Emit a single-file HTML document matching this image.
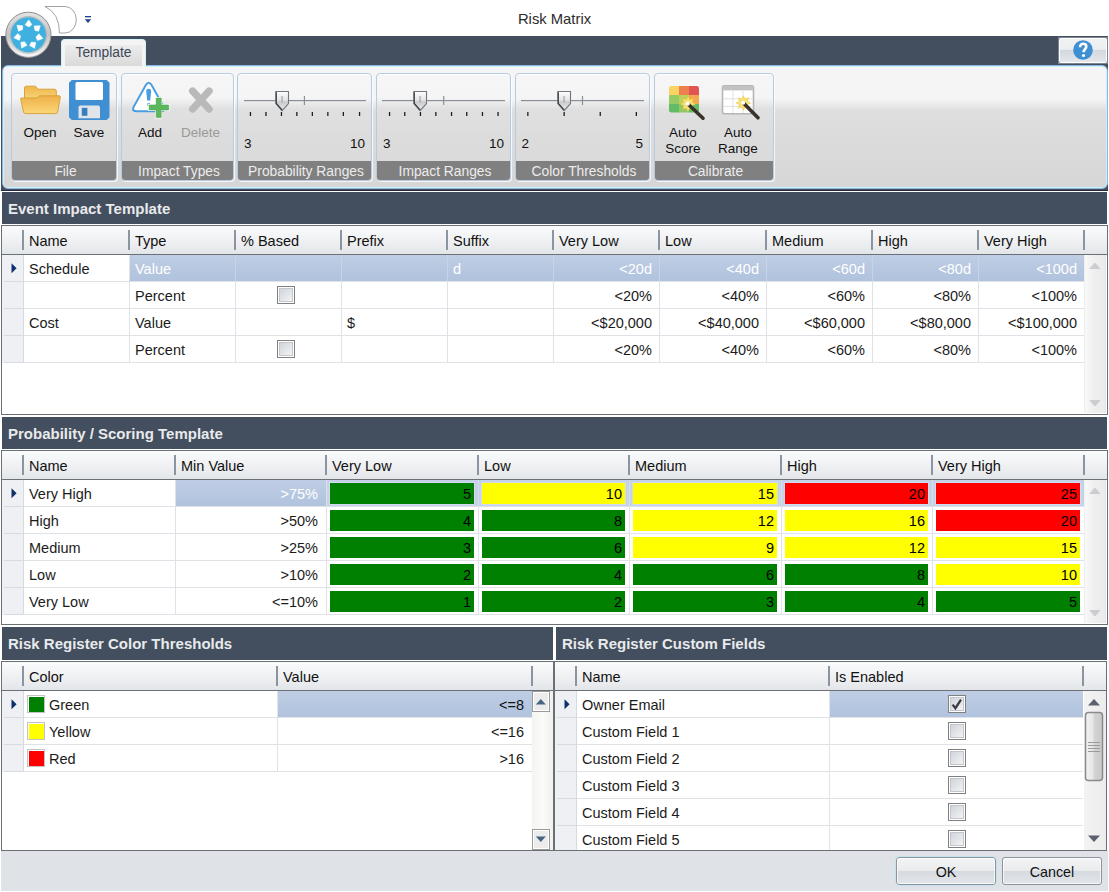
<!DOCTYPE html>
<html><head><meta charset="utf-8">
<style>
*{box-sizing:border-box;margin:0;padding:0}
html,body{width:1109px;height:892px;overflow:hidden;background:#fff;font-family:"Liberation Sans",sans-serif;color:#000}
.a{position:absolute}
.dark{background:#434e5e}
.title{left:0;top:1px;width:1109px;height:36px;text-align:center;font-size:14.8px;line-height:36px;color:#2b2b2b}
.shdr{color:#e8eaec;font-weight:bold;font-size:15px;line-height:33px;padding-left:6px}
.grid{background:#fff;border:1px solid #7b8088}
.grp{position:absolute;top:73px;height:108px;border:1px solid #b5cbe2;border-radius:4px;background:linear-gradient(#f6f6f6 0,#f5f5f5 22%,#e0e0e0 33%,#dcdcdc 60%,#d9d9d9 100%);box-shadow:1px 1px 0 rgba(255,255,255,.75), inset 0 1px 0 #fff}
.glab{position:absolute;left:0;right:0;bottom:0;height:19px;background:#808080;color:#ececec;font-size:13.8px;line-height:21px;text-align:center;padding-left:3px;border-radius:0 0 3px 3px}
.btxt{position:absolute;font-size:13.5px;line-height:16px;color:#111;text-align:center;white-space:nowrap}
.hdr{background:linear-gradient(#fafbfb 0,#f1f2f4 45%,#e3e6e9 100%)}
.hs{background:#8b95a2}
.ht{font-size:14.5px;line-height:29px;color:#111;white-space:nowrap}
.c{font-size:14.5px;line-height:28px;color:#1b1b1b;white-space:nowrap;height:26px}
.r{text-align:right}
.tick{position:absolute;top:112px;width:1.5px;height:4px;background:#222}
</style></head><body>
<div class="a title">Risk Matrix</div>
<!-- dark band -->
<div class="a dark" style="left:1px;top:36px;width:1107px;height:155px"></div>

<!-- help button -->
<div class="a" style="left:1058px;top:37px;width:50px;height:27px;background:#7d8590"></div>
<div class="a" style="left:1059px;top:38px;width:48px;height:25px;background:#fff;border-radius:2px"></div>
<div class="a" style="left:1060px;top:39px;width:46px;height:23px;background:linear-gradient(#f0f1f3 0,#eceef0 45%,#d3d8df 50%,#e4e7eb 100%)"></div>
<svg class="a" style="left:1072px;top:39px" width="22" height="22" viewBox="0 0 22 22"><circle cx="11" cy="11" r="9.8" fill="#3f8fd4"/><path d="M8,8.2 C8,5.8 9.4,4.8 11.2,4.8 C13.2,4.8 14.3,6 14.3,7.6 C14.3,10 11.7,10.4 11.5,13.2" stroke="#fff" stroke-width="2.6" fill="none"/><circle cx="11.5" cy="16.5" r="1.6" fill="#fff"/></svg>

<!-- ribbon panel -->
<div class="a" style="left:2px;top:65px;width:1106px;height:124px;border:1px solid #8fb6e2;border-radius:6px;box-shadow:inset 0 0 0 1px #c9f3fb;background:linear-gradient(#f5f5f5 0,#f5f5f5 27%,#dedede 37%,#dadada 70%,#d6d6d6 100%)"></div>
<div class="a" style="left:1px;top:190px;width:1107px;height:1px;background:#262d38"></div>

<!-- tab -->
<div class="a" style="left:61px;top:39px;width:85px;height:28px;border:1px solid #d3f1f8;border-bottom:none;border-radius:4px 4px 0 0;background:#f4f4f4"></div>
<div class="a" style="left:65px;top:45px;width:77px;height:21px;background:linear-gradient(#ececec,#dadada)"></div>
<div class="a" style="left:61px;top:39px;width:85px;height:27px;font-size:13.8px;line-height:27px;text-align:center;color:#3b4656">Template</div>
<!-- File group -->
<div class="grp" style="left:11px;width:106px"><div class="glab">File</div></div>
<svg class="a" style="left:20px;top:85px" width="41" height="30" viewBox="0 0 41 30">
<defs><linearGradient id="fg1" x1="0" y1="0" x2="0" y2="1"><stop offset="0" stop-color="#efb64c"/><stop offset="1" stop-color="#f7d376"/></linearGradient>
<linearGradient id="fg2" x1="0" y1="0" x2="0" y2="1"><stop offset="0" stop-color="#eeb04a"/><stop offset="1" stop-color="#fbd778"/></linearGradient></defs>
<path d="M4.5,3 Q4.5,1.2 6.3,1.2 L15.5,1.2 L18,4.2 L34.5,4.2 Q36.3,4.2 36.3,6 L36.3,13.5 L4.5,13.5 Z" fill="url(#fg1)" stroke="#d9a23c" stroke-width="1"/>
<path d="M1,13 L17,13 L19.5,10.8 L39.5,10.8 Q40.5,10.8 40.3,12.3 L37.6,27 Q37.3,28.6 35.6,28.6 L5.6,28.6 Q3.9,28.6 3.6,27 L0.8,14.5 Q0.6,13 1,13 Z" fill="url(#fg2)" stroke="#d9a23c" stroke-width="1"/>
</svg>
<svg class="a" style="left:69px;top:80px" width="41" height="40" viewBox="0 0 41 40">
<path d="M2.8,0 L37.7,0 L40.5,2.8 L40.5,37.2 L37.7,40 L2.8,40 L0,37.2 L0,2.8 Z" fill="#3f8fd2"/>
<rect x="6.5" y="2" width="27.5" height="18" rx="1.5" fill="#fff"/>
<path d="M9.5,38.2 L9.5,27.5 Q9.5,25.5 11.5,25.5 L29,25.5 Q31,25.5 31,27.5 L31,38.2 Z" fill="#e1e5ea"/>
<rect x="12.8" y="27.8" width="5.6" height="8" fill="#357fc0"/>
</svg>
<div class="btxt" style="left:20px;top:125px;width:40px">Open</div>
<div class="btxt" style="left:68px;top:125px;width:42px">Save</div>

<!-- Impact Types group -->
<div class="grp" style="left:121px;width:113px"><div class="glab">Impact Types</div></div>
<svg class="a" style="left:128px;top:78px" width="90" height="44" viewBox="0 0 90 44">
<path d="M18,6.8 Q20.7,2.6 23.4,6.8 L35.6,28.6 Q38,33.3 32.6,33.3 L8.8,33.3 Q3.4,33.3 5.8,28.6 Z" fill="#fff" stroke="#4a9de0" stroke-width="2"/>
<path d="M18.2,13 Q18.2,10.8 20.7,10.8 Q23.2,10.8 23.2,13 L22.2,22.6 L19.2,22.6 Z" fill="#4a9de0"/>
<rect x="19.4" y="25.2" width="2.6" height="2.6" fill="#4a9de0"/>
<path d="M27.2,19 H34.2 V26 H41.6 V33 H34.2 V40.4 H27.2 V33 H20.2 V26 H27.2 Z" fill="#fff"/>
<path d="M28.2,20 H33.2 V27 H40.6 V32 H33.2 V39.4 H28.2 V32 H21.2 V27 H28.2 Z" fill="#5cb85c" stroke="#4ea24e" stroke-width="0.6"/>
<path d="M64.6,13 L81.1,31.2 M81.1,13 L64.6,31.2" stroke="#b9b9b9" stroke-width="7.2" stroke-linecap="round"/>
</svg>
<div class="btxt" style="left:130px;top:125px;width:40px">Add</div>
<div class="btxt" style="left:180px;top:125px;width:41px;color:#9a9a9a">Delete</div>

<!-- Probability Ranges -->
<div class="grp" style="left:237px;width:135px"><div class="glab">Probability Ranges</div></div>
<!-- Impact Ranges -->
<div class="grp" style="left:376px;width:135px"><div class="glab">Impact Ranges</div></div>
<!-- Color Thresholds -->
<div class="grp" style="left:515px;width:135px"><div class="glab">Color Thresholds</div></div>
<!-- Calibrate -->
<div class="grp" style="left:654px;width:120px"><div class="glab">Calibrate</div></div>

<svg class="a" style="left:237px;top:85px" width="135" height="35" viewBox="0 0 135 35"><rect x="7" y="15" width="122" height="1.2" fill="#8b9098"/><rect x="66.8" y="11" width="1.2" height="9" fill="#8b9098"/><rect x="12.8" y="27" width="1.3" height="4" fill="#1e1e1e"/><rect x="28.3" y="27" width="1.3" height="4" fill="#1e1e1e"/><rect x="43.8" y="27" width="1.3" height="4" fill="#1e1e1e"/><rect x="59.2" y="27" width="1.3" height="4" fill="#1e1e1e"/><rect x="74.7" y="27" width="1.3" height="4" fill="#1e1e1e"/><rect x="90.2" y="27" width="1.3" height="4" fill="#1e1e1e"/><rect x="105.7" y="27" width="1.3" height="4" fill="#1e1e1e"/><rect x="121.9" y="27" width="1.3" height="4" fill="#1e1e1e"/><defs><linearGradient id="tg237" x1="0" y1="0" x2="0" y2="1"><stop offset="0" stop-color="#fdfdfd"/><stop offset="0.45" stop-color="#e4e4e4"/><stop offset="0.55" stop-color="#cbcbcb"/><stop offset="1" stop-color="#ececec"/></linearGradient></defs><path d="M38.8,6.5 L51.5,6.5 L51.5,18.5 L45.1,25.599999999999994 L38.8,18.5 Z" fill="url(#tg237)" stroke="#70767e" stroke-width="1.1"/><path d="M39.3,7.200000000000003 L39.3,18.5 L45.1,25" stroke="#3f444b" stroke-width="1.2" fill="none"/><rect x="44.6" y="11" width="0.9" height="6.5" fill="#8a9098"/></svg><div class="btxt" style="left:244px;top:136px;text-align:left">3</div><div class="btxt" style="left:325px;top:136px;width:40px;text-align:right">10</div>
<svg class="a" style="left:376px;top:85px" width="135" height="35" viewBox="0 0 135 35"><rect x="6" y="15" width="123" height="1.2" fill="#8b9098"/><rect x="67.1" y="11" width="1.2" height="9" fill="#8b9098"/><rect x="12.9" y="27" width="1.3" height="4" fill="#1e1e1e"/><rect x="28.1" y="27" width="1.3" height="4" fill="#1e1e1e"/><rect x="43.8" y="27" width="1.3" height="4" fill="#1e1e1e"/><rect x="59.2" y="27" width="1.3" height="4" fill="#1e1e1e"/><rect x="74.9" y="27" width="1.3" height="4" fill="#1e1e1e"/><rect x="90.1" y="27" width="1.3" height="4" fill="#1e1e1e"/><rect x="105.8" y="27" width="1.3" height="4" fill="#1e1e1e"/><rect x="121.4" y="27" width="1.3" height="4" fill="#1e1e1e"/><defs><linearGradient id="tg376" x1="0" y1="0" x2="0" y2="1"><stop offset="0" stop-color="#fdfdfd"/><stop offset="0.45" stop-color="#e4e4e4"/><stop offset="0.55" stop-color="#cbcbcb"/><stop offset="1" stop-color="#ececec"/></linearGradient></defs><path d="M37.8,6.5 L50.5,6.5 L50.5,18.5 L44.1,25.599999999999994 L37.8,18.5 Z" fill="url(#tg376)" stroke="#70767e" stroke-width="1.1"/><path d="M38.3,7.200000000000003 L38.3,18.5 L44.1,25" stroke="#3f444b" stroke-width="1.2" fill="none"/><rect x="43.6" y="11" width="0.9" height="6.5" fill="#8a9098"/></svg><div class="btxt" style="left:383px;top:136px;text-align:left">3</div><div class="btxt" style="left:464px;top:136px;width:40px;text-align:right">10</div>
<svg class="a" style="left:515px;top:85px" width="135" height="35" viewBox="0 0 135 35"><rect x="6" y="15" width="123" height="1.2" fill="#8b9098"/><rect x="66.9" y="11" width="1.2" height="9" fill="#8b9098"/><rect x="12.2" y="27" width="1.3" height="4" fill="#1e1e1e"/><rect x="48.5" y="27" width="1.3" height="4" fill="#1e1e1e"/><rect x="84.6" y="27" width="1.3" height="4" fill="#1e1e1e"/><rect x="120.7" y="27" width="1.3" height="4" fill="#1e1e1e"/><defs><linearGradient id="tg515" x1="0" y1="0" x2="0" y2="1"><stop offset="0" stop-color="#fdfdfd"/><stop offset="0.45" stop-color="#e4e4e4"/><stop offset="0.55" stop-color="#cbcbcb"/><stop offset="1" stop-color="#ececec"/></linearGradient></defs><path d="M42.8,6.5 L55.5,6.5 L55.5,18.5 L49.1,25.599999999999994 L42.8,18.5 Z" fill="url(#tg515)" stroke="#70767e" stroke-width="1.1"/><path d="M43.3,7.200000000000003 L43.3,18.5 L49.1,25" stroke="#3f444b" stroke-width="1.2" fill="none"/><rect x="48.6" y="11" width="0.9" height="6.5" fill="#8a9098"/></svg><div class="btxt" style="left:521.5px;top:136px;text-align:left">2</div><div class="btxt" style="left:603px;top:136px;width:40px;text-align:right">5</div>
<svg class="a" style="left:668px;top:85px" width="38" height="36" viewBox="0 0 38 36">
<defs><clipPath id="gc"><rect x="1" y="1" width="30" height="26.5" rx="2.2"/></clipPath></defs>
<g clip-path="url(#gc)">
<rect x="1" y="1" width="10" height="9" fill="#fad460"/><rect x="11" y="1" width="10" height="9" fill="#ee8050"/><rect x="21" y="1" width="10" height="9" fill="#e05454"/>
<rect x="1" y="10" width="10" height="9" fill="#97c964"/><rect x="11" y="10" width="10" height="9" fill="#bcd05a"/><rect x="21" y="10" width="10" height="9" fill="#f3a84e"/>
<rect x="1" y="19" width="10" height="9" fill="#62bc66"/><rect x="11" y="19" width="10" height="9" fill="#92c764"/><rect x="21" y="19" width="10" height="9" fill="#62bc66"/>
</g>
<path d="M20.00,11.80 L21.61,15.12 L25.09,13.91 L23.88,17.39 L27.20,19.00 L23.88,20.61 L25.09,24.09 L21.61,22.88 L20.00,26.20 L18.39,22.88 L14.91,24.09 L16.12,20.61 L12.80,19.00 L16.12,17.39 L14.91,13.91 L18.39,15.12 Z" fill="#f9e27a" stroke="#f3cf4a" stroke-width="0.8"/>
<path d="M20.5,19.5 L35,33.2" stroke="#3a3228" stroke-width="3.6" stroke-linecap="round"/>
<circle cx="19.8" cy="18.8" r="2" fill="#fff"/>
</svg>
<svg class="a" style="left:721px;top:84px" width="40" height="37" viewBox="0 0 40 37">
<rect x="1.5" y="1.8" width="31" height="28" rx="2" fill="#fff" stroke="#b5b5b5" stroke-width="1.6"/>
<rect x="1.5" y="1.8" width="31" height="4.6" fill="#c2c2c2"/>
<path d="M12,6.4 V29 M22,6.4 V29 M2,14.8 H32 M2,22.4 H32" stroke="#e2e2e2" stroke-width="1"/>
<path d="M22.40,11.80 L24.01,15.12 L27.49,13.91 L26.28,17.39 L29.60,19.00 L26.28,20.61 L27.49,24.09 L24.01,22.88 L22.40,26.20 L20.79,22.88 L17.31,24.09 L18.52,20.61 L15.20,19.00 L18.52,17.39 L17.31,13.91 L20.79,15.12 Z" fill="#f9e27a" stroke="#f3cf4a" stroke-width="0.8"/>
<path d="M22.9,19.5 L37,33.8" stroke="#3a3228" stroke-width="3.6" stroke-linecap="round"/>
<circle cx="22.2" cy="18.8" r="2" fill="#fff"/>
</svg>
<div class="btxt" style="left:662px;top:125px;width:42px">Auto<br>Score</div>
<div class="btxt" style="left:716px;top:125px;width:44px">Auto<br>Range</div>

<!-- section headers & grids -->
<div class="a dark shdr" style="left:2px;top:192px;width:1105px;height:32px">Event Impact Template</div>
<div class="a dark shdr" style="left:2px;top:417px;width:1105px;height:32px">Probability / Scoring Template</div>
<div class="a dark shdr" style="left:2px;top:627px;width:551px;height:33px">Risk Register Color Thresholds</div>
<div class="a dark shdr" style="left:556px;top:627px;width:551px;height:33px">Risk Register Custom Fields</div>
<div class="a " style="left:1px;top:225px;width:1107px;height:190px;border:1px solid #6b7076;background:#fff"></div>
<div class="a hdr" style="left:2px;top:226px;width:1105px;height:28px;"></div>
<div class="a " style="left:2px;top:254px;width:1105px;height:1px;background:#6b7076"></div>
<div class="a hs" style="left:22px;top:230px;width:2px;height:20px;"></div>
<div class="a ht" style="left:29px;top:227px">Name</div>
<div class="a hs" style="left:128px;top:230px;width:2px;height:20px;"></div>
<div class="a ht" style="left:135px;top:227px">Type</div>
<div class="a hs" style="left:234px;top:230px;width:2px;height:20px;"></div>
<div class="a ht" style="left:241px;top:227px">% Based</div>
<div class="a hs" style="left:340px;top:230px;width:2px;height:20px;"></div>
<div class="a ht" style="left:347px;top:227px">Prefix</div>
<div class="a hs" style="left:446px;top:230px;width:2px;height:20px;"></div>
<div class="a ht" style="left:453px;top:227px">Suffix</div>
<div class="a hs" style="left:552px;top:230px;width:2px;height:20px;"></div>
<div class="a ht" style="left:559px;top:227px">Very Low</div>
<div class="a hs" style="left:658px;top:230px;width:2px;height:20px;"></div>
<div class="a ht" style="left:665px;top:227px">Low</div>
<div class="a hs" style="left:765px;top:230px;width:2px;height:20px;"></div>
<div class="a ht" style="left:772px;top:227px">Medium</div>
<div class="a hs" style="left:871px;top:230px;width:2px;height:20px;"></div>
<div class="a ht" style="left:878px;top:227px">High</div>
<div class="a hs" style="left:977px;top:230px;width:2px;height:20px;"></div>
<div class="a ht" style="left:984px;top:227px">Very High</div>
<div class="a hs" style="left:1083px;top:230px;width:2px;height:20px;"></div>
<div class="a " style="left:2px;top:255px;width:21px;height:108px;background:#eef0f4"></div>
<div class="a " style="left:23px;top:255px;width:1px;height:108px;background:#d6dbe2"></div>
<div class="a " style="left:4px;top:281px;width:19px;height:1px;background:#d6dbe2"></div>
<div class="a " style="left:24px;top:281px;width:1060px;height:1px;background:#dfe3e8"></div>
<div class="a " style="left:4px;top:308px;width:19px;height:1px;background:#d6dbe2"></div>
<div class="a " style="left:24px;top:308px;width:1060px;height:1px;background:#dfe3e8"></div>
<div class="a " style="left:4px;top:335px;width:19px;height:1px;background:#d6dbe2"></div>
<div class="a " style="left:24px;top:335px;width:1060px;height:1px;background:#dfe3e8"></div>
<div class="a " style="left:4px;top:362px;width:19px;height:1px;background:#d6dbe2"></div>
<div class="a " style="left:24px;top:362px;width:1060px;height:1px;background:#dfe3e8"></div>
<svg class="a" style="left:11px;top:263px" width="6" height="11" viewBox="0 0 6 11"><path d="M0.5,0.3 L5.6,5.3 L0.5,10.3 Z" fill="#0f2f6e"/></svg>
<div class="a " style="left:129px;top:255px;width:1px;height:108px;background:#dfe3e8"></div>
<div class="a " style="left:235px;top:255px;width:1px;height:108px;background:#dfe3e8"></div>
<div class="a " style="left:341px;top:255px;width:1px;height:108px;background:#dfe3e8"></div>
<div class="a " style="left:447px;top:255px;width:1px;height:108px;background:#dfe3e8"></div>
<div class="a " style="left:553px;top:255px;width:1px;height:108px;background:#dfe3e8"></div>
<div class="a " style="left:659px;top:255px;width:1px;height:108px;background:#dfe3e8"></div>
<div class="a " style="left:766px;top:255px;width:1px;height:108px;background:#dfe3e8"></div>
<div class="a " style="left:872px;top:255px;width:1px;height:108px;background:#dfe3e8"></div>
<div class="a " style="left:978px;top:255px;width:1px;height:108px;background:#dfe3e8"></div>
<div class="a " style="left:130px;top:255px;width:954px;height:26px;background:linear-gradient(#bfcee4,#b0c2dd)"></div>
<div class="a " style="left:235px;top:255px;width:1px;height:26px;background:#c9d5e6"></div>
<div class="a " style="left:341px;top:255px;width:1px;height:26px;background:#c9d5e6"></div>
<div class="a " style="left:447px;top:255px;width:1px;height:26px;background:#c9d5e6"></div>
<div class="a " style="left:553px;top:255px;width:1px;height:26px;background:#c9d5e6"></div>
<div class="a " style="left:659px;top:255px;width:1px;height:26px;background:#c9d5e6"></div>
<div class="a " style="left:766px;top:255px;width:1px;height:26px;background:#c9d5e6"></div>
<div class="a " style="left:872px;top:255px;width:1px;height:26px;background:#c9d5e6"></div>
<div class="a " style="left:978px;top:255px;width:1px;height:26px;background:#c9d5e6"></div>
<div class="a c" style="left:29px;top:255px;color:#1b1b1b">Schedule</div>
<div class="a c" style="left:135px;top:255px;color:#fff">Value</div>
<div class="a c" style="left:453px;top:255px;color:#fff">d</div>
<div class="a c r" style="left:554px;top:255px;width:98px;color:#fff">&lt;20d</div>
<div class="a c r" style="left:660px;top:255px;width:99px;color:#fff">&lt;40d</div>
<div class="a c r" style="left:767px;top:255px;width:98px;color:#fff">&lt;60d</div>
<div class="a c r" style="left:873px;top:255px;width:98px;color:#fff">&lt;80d</div>
<div class="a c r" style="left:979px;top:255px;width:98px;color:#fff">&lt;100d</div>
<div class="a c" style="left:135px;top:282px;color:#1b1b1b">Percent</div>
<svg class="a" style="left:277px;top:286px" width="18" height="18" viewBox="0 0 18 18"><defs><linearGradient id="cbg" x1="0" y1="0" x2="1" y2="1"><stop offset="0" stop-color="#cfd3da"/><stop offset="1" stop-color="#f3f4f4"/></linearGradient></defs><rect x="0.5" y="0.5" width="17" height="17" fill="#fff" stroke="#808080" stroke-width="1"/><rect x="2.5" y="2.5" width="13" height="13" fill="url(#cbg)" stroke="#c2c6cd" stroke-width="1"/></svg>
<div class="a c r" style="left:554px;top:282px;width:98px;color:#1b1b1b">&lt;20%</div>
<div class="a c r" style="left:660px;top:282px;width:99px;color:#1b1b1b">&lt;40%</div>
<div class="a c r" style="left:767px;top:282px;width:98px;color:#1b1b1b">&lt;60%</div>
<div class="a c r" style="left:873px;top:282px;width:98px;color:#1b1b1b">&lt;80%</div>
<div class="a c r" style="left:979px;top:282px;width:98px;color:#1b1b1b">&lt;100%</div>
<div class="a c" style="left:29px;top:309px;color:#1b1b1b">Cost</div>
<div class="a c" style="left:135px;top:309px;color:#1b1b1b">Value</div>
<div class="a c" style="left:347px;top:309px;color:#1b1b1b">$</div>
<div class="a c r" style="left:554px;top:309px;width:98px;color:#1b1b1b">&lt;$20,000</div>
<div class="a c r" style="left:660px;top:309px;width:99px;color:#1b1b1b">&lt;$40,000</div>
<div class="a c r" style="left:767px;top:309px;width:98px;color:#1b1b1b">&lt;$60,000</div>
<div class="a c r" style="left:873px;top:309px;width:98px;color:#1b1b1b">&lt;$80,000</div>
<div class="a c r" style="left:979px;top:309px;width:98px;color:#1b1b1b">&lt;$100,000</div>
<div class="a c" style="left:135px;top:336px;color:#1b1b1b">Percent</div>
<svg class="a" style="left:277px;top:340px" width="18" height="18" viewBox="0 0 18 18"><defs><linearGradient id="cbg" x1="0" y1="0" x2="1" y2="1"><stop offset="0" stop-color="#cfd3da"/><stop offset="1" stop-color="#f3f4f4"/></linearGradient></defs><rect x="0.5" y="0.5" width="17" height="17" fill="#fff" stroke="#808080" stroke-width="1"/><rect x="2.5" y="2.5" width="13" height="13" fill="url(#cbg)" stroke="#c2c6cd" stroke-width="1"/></svg>
<div class="a c r" style="left:554px;top:336px;width:98px;color:#1b1b1b">&lt;20%</div>
<div class="a c r" style="left:660px;top:336px;width:99px;color:#1b1b1b">&lt;40%</div>
<div class="a c r" style="left:767px;top:336px;width:98px;color:#1b1b1b">&lt;60%</div>
<div class="a c r" style="left:873px;top:336px;width:98px;color:#1b1b1b">&lt;80%</div>
<div class="a c r" style="left:979px;top:336px;width:98px;color:#1b1b1b">&lt;100%</div>
<div class="a " style="left:1084px;top:255px;width:23px;height:159px;background:#fff"><div style="width:22px;height:158px;background:linear-gradient(90deg,#e9ebee 0,#f9f9f9 8%,#f4f4f4 20%,#eeeeee 50%,#ececec 90%,#e4e6e9 100%)"></div></div>
<svg class="a" style="left:1088px;top:262px" width="14" height="8" viewBox="0 0 14 8"><path d="M1.2,7 L6.3,1 L7.5,1 L12.6,7 Z" fill="#cbccd0"/></svg>
<svg class="a" style="left:1088px;top:399px" width="14" height="8" viewBox="0 0 14 8"><path d="M1.2,1 L12.6,1 L7.5,7 L6.3,7 Z" fill="#cbccd0"/></svg>
<div class="a " style="left:1px;top:450px;width:1107px;height:175px;border:1px solid #6b7076;background:#fff"></div>
<div class="a hdr" style="left:2px;top:451px;width:1105px;height:28px;"></div>
<div class="a " style="left:2px;top:479px;width:1105px;height:1px;background:#6b7076"></div>
<div class="a hs" style="left:22px;top:455px;width:2px;height:20px;"></div>
<div class="a ht" style="left:29px;top:452px">Name</div>
<div class="a hs" style="left:174px;top:455px;width:2px;height:20px;"></div>
<div class="a ht" style="left:181px;top:452px">Min Value</div>
<div class="a hs" style="left:325px;top:455px;width:2px;height:20px;"></div>
<div class="a ht" style="left:332px;top:452px">Very Low</div>
<div class="a hs" style="left:477px;top:455px;width:2px;height:20px;"></div>
<div class="a ht" style="left:484px;top:452px">Low</div>
<div class="a hs" style="left:628px;top:455px;width:2px;height:20px;"></div>
<div class="a ht" style="left:635px;top:452px">Medium</div>
<div class="a hs" style="left:780px;top:455px;width:2px;height:20px;"></div>
<div class="a ht" style="left:787px;top:452px">High</div>
<div class="a hs" style="left:931px;top:455px;width:2px;height:20px;"></div>
<div class="a ht" style="left:938px;top:452px">Very High</div>
<div class="a hs" style="left:1083px;top:455px;width:2px;height:20px;"></div>
<div class="a " style="left:2px;top:480px;width:21px;height:135px;background:#eef0f4"></div>
<div class="a " style="left:23px;top:480px;width:1px;height:135px;background:#d6dbe2"></div>
<div class="a " style="left:4px;top:506px;width:19px;height:1px;background:#d6dbe2"></div>
<div class="a " style="left:24px;top:506px;width:1060px;height:1px;background:#dfe3e8"></div>
<div class="a " style="left:4px;top:533px;width:19px;height:1px;background:#d6dbe2"></div>
<div class="a " style="left:24px;top:533px;width:1060px;height:1px;background:#dfe3e8"></div>
<div class="a " style="left:4px;top:560px;width:19px;height:1px;background:#d6dbe2"></div>
<div class="a " style="left:24px;top:560px;width:1060px;height:1px;background:#dfe3e8"></div>
<div class="a " style="left:4px;top:587px;width:19px;height:1px;background:#d6dbe2"></div>
<div class="a " style="left:24px;top:587px;width:1060px;height:1px;background:#dfe3e8"></div>
<div class="a " style="left:4px;top:614px;width:19px;height:1px;background:#d6dbe2"></div>
<div class="a " style="left:24px;top:614px;width:1060px;height:1px;background:#dfe3e8"></div>
<svg class="a" style="left:11px;top:488px" width="6" height="11" viewBox="0 0 6 11"><path d="M0.5,0.3 L5.6,5.3 L0.5,10.3 Z" fill="#0f2f6e"/></svg>
<div class="a " style="left:175px;top:480px;width:1px;height:135px;background:#dfe3e8"></div>
<div class="a " style="left:326px;top:480px;width:1px;height:135px;background:#dfe3e8"></div>
<div class="a " style="left:478px;top:480px;width:1px;height:135px;background:#dfe3e8"></div>
<div class="a " style="left:629px;top:480px;width:1px;height:135px;background:#dfe3e8"></div>
<div class="a " style="left:781px;top:480px;width:1px;height:135px;background:#dfe3e8"></div>
<div class="a " style="left:932px;top:480px;width:1px;height:135px;background:#dfe3e8"></div>
<div class="a " style="left:327px;top:480px;width:757px;height:26px;background:#c5d2e7"></div>
<div class="a " style="left:478px;top:480px;width:1px;height:26px;background:#d5dde9"></div>
<div class="a " style="left:629px;top:480px;width:1px;height:26px;background:#d5dde9"></div>
<div class="a " style="left:781px;top:480px;width:1px;height:26px;background:#d5dde9"></div>
<div class="a " style="left:932px;top:480px;width:1px;height:26px;background:#d5dde9"></div>
<div class="a c" style="left:29px;top:480px;color:#1b1b1b">Very High</div>
<div class="a " style="left:176px;top:480px;width:150px;height:26px;background:linear-gradient(#bfcee4,#b0c2dd)"></div>
<div class="a c r" style="left:176px;top:480px;width:142px;color:#fff">&gt;75%</div>
<div class="a " style="left:329px;top:482px;width:146px;height:23px;background:#d3dcef"></div>
<div class="a " style="left:330px;top:483px;width:144px;height:21px;background:#008000"></div>
<div class="a c r" style="left:330px;top:480px;width:141px;color:#000">5</div>
<div class="a " style="left:481px;top:482px;width:145px;height:23px;background:#d3dcef"></div>
<div class="a " style="left:482px;top:483px;width:143px;height:21px;background:#ffff00"></div>
<div class="a c r" style="left:482px;top:480px;width:140px;color:#000">10</div>
<div class="a " style="left:632px;top:482px;width:146px;height:23px;background:#d3dcef"></div>
<div class="a " style="left:633px;top:483px;width:144px;height:21px;background:#ffff00"></div>
<div class="a c r" style="left:633px;top:480px;width:141px;color:#000">15</div>
<div class="a " style="left:784px;top:482px;width:145px;height:23px;background:#d3dcef"></div>
<div class="a " style="left:785px;top:483px;width:143px;height:21px;background:#ff0000"></div>
<div class="a c r" style="left:785px;top:480px;width:140px;color:#000">20</div>
<div class="a " style="left:935px;top:482px;width:146px;height:23px;background:#d3dcef"></div>
<div class="a " style="left:936px;top:483px;width:144px;height:21px;background:#ff0000"></div>
<div class="a c r" style="left:936px;top:480px;width:141px;color:#000">25</div>
<div class="a c" style="left:29px;top:507px;color:#1b1b1b">High</div>
<div class="a c r" style="left:176px;top:507px;width:142px;color:#1b1b1b">&gt;50%</div>
<div class="a " style="left:330px;top:510px;width:144px;height:21px;background:#008000"></div>
<div class="a c r" style="left:330px;top:507px;width:141px;color:#000">4</div>
<div class="a " style="left:482px;top:510px;width:143px;height:21px;background:#008000"></div>
<div class="a c r" style="left:482px;top:507px;width:140px;color:#000">8</div>
<div class="a " style="left:633px;top:510px;width:144px;height:21px;background:#ffff00"></div>
<div class="a c r" style="left:633px;top:507px;width:141px;color:#000">12</div>
<div class="a " style="left:785px;top:510px;width:143px;height:21px;background:#ffff00"></div>
<div class="a c r" style="left:785px;top:507px;width:140px;color:#000">16</div>
<div class="a " style="left:936px;top:510px;width:144px;height:21px;background:#ff0000"></div>
<div class="a c r" style="left:936px;top:507px;width:141px;color:#000">20</div>
<div class="a c" style="left:29px;top:534px;color:#1b1b1b">Medium</div>
<div class="a c r" style="left:176px;top:534px;width:142px;color:#1b1b1b">&gt;25%</div>
<div class="a " style="left:330px;top:537px;width:144px;height:21px;background:#008000"></div>
<div class="a c r" style="left:330px;top:534px;width:141px;color:#000">3</div>
<div class="a " style="left:482px;top:537px;width:143px;height:21px;background:#008000"></div>
<div class="a c r" style="left:482px;top:534px;width:140px;color:#000">6</div>
<div class="a " style="left:633px;top:537px;width:144px;height:21px;background:#ffff00"></div>
<div class="a c r" style="left:633px;top:534px;width:141px;color:#000">9</div>
<div class="a " style="left:785px;top:537px;width:143px;height:21px;background:#ffff00"></div>
<div class="a c r" style="left:785px;top:534px;width:140px;color:#000">12</div>
<div class="a " style="left:936px;top:537px;width:144px;height:21px;background:#ffff00"></div>
<div class="a c r" style="left:936px;top:534px;width:141px;color:#000">15</div>
<div class="a c" style="left:29px;top:561px;color:#1b1b1b">Low</div>
<div class="a c r" style="left:176px;top:561px;width:142px;color:#1b1b1b">&gt;10%</div>
<div class="a " style="left:330px;top:564px;width:144px;height:21px;background:#008000"></div>
<div class="a c r" style="left:330px;top:561px;width:141px;color:#000">2</div>
<div class="a " style="left:482px;top:564px;width:143px;height:21px;background:#008000"></div>
<div class="a c r" style="left:482px;top:561px;width:140px;color:#000">4</div>
<div class="a " style="left:633px;top:564px;width:144px;height:21px;background:#008000"></div>
<div class="a c r" style="left:633px;top:561px;width:141px;color:#000">6</div>
<div class="a " style="left:785px;top:564px;width:143px;height:21px;background:#008000"></div>
<div class="a c r" style="left:785px;top:561px;width:140px;color:#000">8</div>
<div class="a " style="left:936px;top:564px;width:144px;height:21px;background:#ffff00"></div>
<div class="a c r" style="left:936px;top:561px;width:141px;color:#000">10</div>
<div class="a c" style="left:29px;top:588px;color:#1b1b1b">Very Low</div>
<div class="a c r" style="left:176px;top:588px;width:142px;color:#1b1b1b">&lt;=10%</div>
<div class="a " style="left:330px;top:591px;width:144px;height:21px;background:#008000"></div>
<div class="a c r" style="left:330px;top:588px;width:141px;color:#000">1</div>
<div class="a " style="left:482px;top:591px;width:143px;height:21px;background:#008000"></div>
<div class="a c r" style="left:482px;top:588px;width:140px;color:#000">2</div>
<div class="a " style="left:633px;top:591px;width:144px;height:21px;background:#008000"></div>
<div class="a c r" style="left:633px;top:588px;width:141px;color:#000">3</div>
<div class="a " style="left:785px;top:591px;width:143px;height:21px;background:#008000"></div>
<div class="a c r" style="left:785px;top:588px;width:140px;color:#000">4</div>
<div class="a " style="left:936px;top:591px;width:144px;height:21px;background:#008000"></div>
<div class="a c r" style="left:936px;top:588px;width:141px;color:#000">5</div>
<div class="a " style="left:1084px;top:480px;width:23px;height:144px;background:#fff"><div style="width:22px;height:143px;background:linear-gradient(90deg,#e9ebee 0,#f9f9f9 8%,#f4f4f4 20%,#eeeeee 50%,#ececec 90%,#e4e6e9 100%)"></div></div>
<svg class="a" style="left:1088px;top:487px" width="14" height="8" viewBox="0 0 14 8"><path d="M1.2,7 L6.3,1 L7.5,1 L12.6,7 Z" fill="#cbccd0"/></svg>
<svg class="a" style="left:1088px;top:609px" width="14" height="8" viewBox="0 0 14 8"><path d="M1.2,1 L12.6,1 L7.5,7 L6.3,7 Z" fill="#cbccd0"/></svg>
<div class="a " style="left:1px;top:661px;width:553px;height:190px;border:1px solid #6b7076;background:#fff"></div>
<div class="a hdr" style="left:2px;top:662px;width:551px;height:28px;"></div>
<div class="a " style="left:2px;top:690px;width:551px;height:1px;background:#6b7076"></div>
<div class="a hs" style="left:22px;top:666px;width:2px;height:20px;"></div>
<div class="a ht" style="left:29px;top:663px">Color</div>
<div class="a hs" style="left:276px;top:666px;width:2px;height:20px;"></div>
<div class="a ht" style="left:283px;top:663px">Value</div>
<div class="a hs" style="left:531px;top:666px;width:2px;height:20px;"></div>
<div class="a " style="left:2px;top:691px;width:21px;height:81px;background:#eef0f4"></div>
<div class="a " style="left:23px;top:691px;width:1px;height:81px;background:#d6dbe2"></div>
<div class="a " style="left:4px;top:717px;width:19px;height:1px;background:#d6dbe2"></div>
<div class="a " style="left:24px;top:717px;width:508px;height:1px;background:#dfe3e8"></div>
<div class="a " style="left:4px;top:744px;width:19px;height:1px;background:#d6dbe2"></div>
<div class="a " style="left:24px;top:744px;width:508px;height:1px;background:#dfe3e8"></div>
<div class="a " style="left:4px;top:771px;width:19px;height:1px;background:#d6dbe2"></div>
<div class="a " style="left:24px;top:771px;width:508px;height:1px;background:#dfe3e8"></div>
<svg class="a" style="left:11px;top:699px" width="6" height="11" viewBox="0 0 6 11"><path d="M0.5,0.3 L5.6,5.3 L0.5,10.3 Z" fill="#0f2f6e"/></svg>
<div class="a " style="left:277px;top:691px;width:1px;height:81px;background:#dfe3e8"></div>
<div class="a " style="left:27px;top:695px;width:18px;height:18px;border:1px solid #c3c3c3;background:#fff;padding:1px 0 0 1px"><div style="width:15px;height:15px;background:#008000"></div></div>
<div class="a c" style="left:49px;top:691px">Green</div>
<div class="a " style="left:278px;top:691px;width:254px;height:26px;background:linear-gradient(#bfcee4,#b0c2dd)"></div>
<div class="a c r" style="left:278px;top:691px;width:246px;color:#111">&lt;=8</div>
<div class="a " style="left:27px;top:722px;width:18px;height:18px;border:1px solid #c3c3c3;background:#fff;padding:1px 0 0 1px"><div style="width:15px;height:15px;background:#ffff00"></div></div>
<div class="a c" style="left:49px;top:718px">Yellow</div>
<div class="a c r" style="left:278px;top:718px;width:246px;color:#1b1b1b">&lt;=16</div>
<div class="a " style="left:27px;top:749px;width:18px;height:18px;border:1px solid #c3c3c3;background:#fff;padding:1px 0 0 1px"><div style="width:15px;height:15px;background:#ff0000"></div></div>
<div class="a c" style="left:49px;top:745px">Red</div>
<div class="a c r" style="left:278px;top:745px;width:246px;color:#1b1b1b">&gt;16</div>
<div class="a " style="left:532px;top:691px;width:21px;height:159px;background:linear-gradient(90deg,#f4f4f0,#fbfbfa 50%,#f0f0ec)"></div>
<div class="a " style="left:532px;top:691px;width:18px;height:21px;border:1px solid #9a9a9a;background:#fff;padding:1px"><div style="width:14px;height:17px;background:#ececec"></div></div>
<svg class="a" style="left:535px;top:698px" width="12" height="7" viewBox="0 0 12 7"><path d="M0.8,6.5 L5.8,1 L10.8,6.5 Z" fill="#476581"/></svg>
<div class="a " style="left:532px;top:829px;width:18px;height:21px;border:1px solid #9a9a9a;background:#fff;padding:1px"><div style="width:14px;height:17px;background:#ececec"></div></div>
<svg class="a" style="left:535px;top:836px" width="12" height="7" viewBox="0 0 12 7"><path d="M0.8,0.5 L5.8,6 L10.8,0.5 Z" fill="#476581"/></svg>
<div class="a " style="left:554px;top:661px;width:553px;height:190px;border:1px solid #6b7076;background:#fff"></div>
<div class="a hdr" style="left:555px;top:662px;width:551px;height:28px;"></div>
<div class="a " style="left:555px;top:690px;width:551px;height:1px;background:#6b7076"></div>
<div class="a hs" style="left:575px;top:666px;width:2px;height:20px;"></div>
<div class="a ht" style="left:582px;top:663px">Name</div>
<div class="a hs" style="left:828px;top:666px;width:2px;height:20px;"></div>
<div class="a ht" style="left:835px;top:663px">Is Enabled</div>
<div class="a hs" style="left:1082px;top:666px;width:2px;height:20px;"></div>
<div class="a " style="left:555px;top:691px;width:21px;height:159px;background:#eef0f4"></div>
<div class="a " style="left:576px;top:691px;width:1px;height:159px;background:#d6dbe2"></div>
<div class="a " style="left:557px;top:717px;width:19px;height:1px;background:#d6dbe2"></div>
<div class="a " style="left:577px;top:717px;width:506px;height:1px;background:#dfe3e8"></div>
<div class="a " style="left:557px;top:744px;width:19px;height:1px;background:#d6dbe2"></div>
<div class="a " style="left:577px;top:744px;width:506px;height:1px;background:#dfe3e8"></div>
<div class="a " style="left:557px;top:771px;width:19px;height:1px;background:#d6dbe2"></div>
<div class="a " style="left:577px;top:771px;width:506px;height:1px;background:#dfe3e8"></div>
<div class="a " style="left:557px;top:798px;width:19px;height:1px;background:#d6dbe2"></div>
<div class="a " style="left:577px;top:798px;width:506px;height:1px;background:#dfe3e8"></div>
<div class="a " style="left:557px;top:825px;width:19px;height:1px;background:#d6dbe2"></div>
<div class="a " style="left:577px;top:825px;width:506px;height:1px;background:#dfe3e8"></div>
<svg class="a" style="left:564px;top:699px" width="6" height="11" viewBox="0 0 6 11"><path d="M0.5,0.3 L5.6,5.3 L0.5,10.3 Z" fill="#0f2f6e"/></svg>
<div class="a " style="left:829px;top:691px;width:1px;height:159px;background:#dfe3e8"></div>
<div class="a c" style="left:582px;top:691px;color:#1b1b1b">Owner Email</div>
<div class="a " style="left:830px;top:691px;width:253px;height:26px;background:linear-gradient(#bfcee4,#b0c2dd)"></div>
<svg class="a" style="left:948px;top:695px" width="18" height="18" viewBox="0 0 18 18"><defs><linearGradient id="cbg" x1="0" y1="0" x2="1" y2="1"><stop offset="0" stop-color="#cfd3da"/><stop offset="1" stop-color="#f3f4f4"/></linearGradient></defs><rect x="0.5" y="0.5" width="17" height="17" fill="#fff" stroke="#808080" stroke-width="1"/><rect x="2.5" y="2.5" width="13" height="13" fill="url(#cbg)" stroke="#c2c6cd" stroke-width="1"/><path d="M4.6,9.6 L7.4,13.2 L13,4.6" stroke="#3b3d45" stroke-width="2.3" fill="none" stroke-linejoin="miter"/></svg>
<div class="a c" style="left:582px;top:718px;color:#1b1b1b">Custom Field 1</div>
<svg class="a" style="left:948px;top:722px" width="18" height="18" viewBox="0 0 18 18"><defs><linearGradient id="cbg" x1="0" y1="0" x2="1" y2="1"><stop offset="0" stop-color="#cfd3da"/><stop offset="1" stop-color="#f3f4f4"/></linearGradient></defs><rect x="0.5" y="0.5" width="17" height="17" fill="#fff" stroke="#808080" stroke-width="1"/><rect x="2.5" y="2.5" width="13" height="13" fill="url(#cbg)" stroke="#c2c6cd" stroke-width="1"/></svg>
<div class="a c" style="left:582px;top:745px;color:#1b1b1b">Custom Field 2</div>
<svg class="a" style="left:948px;top:749px" width="18" height="18" viewBox="0 0 18 18"><defs><linearGradient id="cbg" x1="0" y1="0" x2="1" y2="1"><stop offset="0" stop-color="#cfd3da"/><stop offset="1" stop-color="#f3f4f4"/></linearGradient></defs><rect x="0.5" y="0.5" width="17" height="17" fill="#fff" stroke="#808080" stroke-width="1"/><rect x="2.5" y="2.5" width="13" height="13" fill="url(#cbg)" stroke="#c2c6cd" stroke-width="1"/></svg>
<div class="a c" style="left:582px;top:772px;color:#1b1b1b">Custom Field 3</div>
<svg class="a" style="left:948px;top:776px" width="18" height="18" viewBox="0 0 18 18"><defs><linearGradient id="cbg" x1="0" y1="0" x2="1" y2="1"><stop offset="0" stop-color="#cfd3da"/><stop offset="1" stop-color="#f3f4f4"/></linearGradient></defs><rect x="0.5" y="0.5" width="17" height="17" fill="#fff" stroke="#808080" stroke-width="1"/><rect x="2.5" y="2.5" width="13" height="13" fill="url(#cbg)" stroke="#c2c6cd" stroke-width="1"/></svg>
<div class="a c" style="left:582px;top:799px;color:#1b1b1b">Custom Field 4</div>
<svg class="a" style="left:948px;top:803px" width="18" height="18" viewBox="0 0 18 18"><defs><linearGradient id="cbg" x1="0" y1="0" x2="1" y2="1"><stop offset="0" stop-color="#cfd3da"/><stop offset="1" stop-color="#f3f4f4"/></linearGradient></defs><rect x="0.5" y="0.5" width="17" height="17" fill="#fff" stroke="#808080" stroke-width="1"/><rect x="2.5" y="2.5" width="13" height="13" fill="url(#cbg)" stroke="#c2c6cd" stroke-width="1"/></svg>
<div class="a c" style="left:582px;top:826px;color:#1b1b1b">Custom Field 5</div>
<svg class="a" style="left:948px;top:830px" width="18" height="18" viewBox="0 0 18 18"><defs><linearGradient id="cbg" x1="0" y1="0" x2="1" y2="1"><stop offset="0" stop-color="#cfd3da"/><stop offset="1" stop-color="#f3f4f4"/></linearGradient></defs><rect x="0.5" y="0.5" width="17" height="17" fill="#fff" stroke="#808080" stroke-width="1"/><rect x="2.5" y="2.5" width="13" height="13" fill="url(#cbg)" stroke="#c2c6cd" stroke-width="1"/></svg>
<div class="a " style="left:1084px;top:691px;width:22px;height:159px;background:linear-gradient(90deg,#f3f3f3,#ececec)"></div>
<svg class="a" style="left:1087px;top:698px" width="14" height="8" viewBox="0 0 14 8"><path d="M1,7.5 L7,1 L13,7.5 Z" fill="#5b6170"/></svg>
<svg class="a" style="left:1087px;top:835px" width="14" height="8" viewBox="0 0 14 8"><path d="M1,0.5 L7,7 L13,0.5 Z" fill="#5b6170"/></svg>
<svg class="a" style="left:1084px;top:711px" width="20" height="71" viewBox="0 0 20 71"><defs><linearGradient id="thg" x1="0" y1="0" x2="1" y2="0"><stop offset="0" stop-color="#f2f2f2"/><stop offset="0.45" stop-color="#e6e6e6"/><stop offset="0.5" stop-color="#d4d4d4"/><stop offset="1" stop-color="#c9c9c9"/></linearGradient></defs><rect x="1.5" y="1.5" width="17" height="68" rx="3" fill="url(#thg)" stroke="#8a8a8a" stroke-width="1.5"/><path d="M4,31.5 H16 M4,34.5 H16 M4,37.5 H16 M4,40.5 H16" stroke="#9a9a9a" stroke-width="1"/></svg>
<div class="a " style="left:1px;top:851px;width:1107px;height:40px;background:#dfe3e8"></div>
<div class="a " style="left:896px;top:857px;width:100px;height:28px;border:1px solid #8e949b;border-radius:3px;background:linear-gradient(#f3f4f5 0,#e9ebed 48%,#d6dbe1 52%,#e2e5e9 100%);box-shadow:inset 0 0 0 1px rgba(255,255,255,.7);outline:1px solid #c5e3ef"><div style="text-align:center;font-size:14.3px;line-height:28px;color:#111">OK</div></div>
<div class="a " style="left:1002px;top:857px;width:100px;height:28px;border:1px solid #8e949b;border-radius:3px;background:linear-gradient(#f3f4f5 0,#e9ebed 48%,#d6dbe1 52%,#e2e5e9 100%);box-shadow:inset 0 0 0 1px rgba(255,255,255,.7)"><div style="text-align:center;font-size:14.3px;line-height:28px;color:#111">Cancel</div></div>
<svg class="a" style="left:0;top:0" width="100" height="64" viewBox="0 0 100 64">
<defs><linearGradient id="ring" x1="0" y1="0" x2="0" y2="1"><stop offset="0" stop-color="#e4e4e4"/><stop offset="0.5" stop-color="#c4c4c4"/><stop offset="1" stop-color="#f6f6f6"/></linearGradient></defs>
<path d="M44.9,6.5 L65,6.5 A11.3,13.25 0 0 1 65,33 L59.5,33 Q59.5,13 44.9,6.5 Z" fill="#fff" stroke="#a4a4a4" stroke-width="1"/>
<circle cx="28.4" cy="34.8" r="22.6" fill="url(#ring)" stroke="#8e8e8e" stroke-width="1"/>
<circle cx="28.4" cy="34.8" r="18.3" fill="none" stroke="#b4b4b4" stroke-width="1"/>
<circle cx="28.4" cy="34.8" r="17.6" fill="#40b0e0"/>
<path d="M28.70,19.90 L31.90,24.60 L29.00,26.90 L25.10,24.80 Z" fill="#fff" stroke="#fff" stroke-width="0.6" stroke-linejoin="round"/><path d="M40.24,25.74 L38.56,31.18 L34.95,30.34 L34.16,25.99 Z" fill="#fff" stroke="#fff" stroke-width="0.6" stroke-linejoin="round"/><path d="M42.86,38.41 L37.57,40.48 L35.97,37.14 L38.88,33.81 Z" fill="#fff" stroke="#fff" stroke-width="0.6" stroke-linejoin="round"/><path d="M34.59,48.35 L29.67,45.51 L31.29,42.18 L35.71,42.38 Z" fill="#fff" stroke="#fff" stroke-width="0.6" stroke-linejoin="round"/><path d="M21.66,48.09 L20.82,42.47 L24.43,41.66 L27.03,45.24 Z" fill="#fff" stroke="#fff" stroke-width="0.6" stroke-linejoin="round"/><path d="M13.81,37.82 L17.68,33.66 L20.56,35.97 L19.39,40.24 Z" fill="#fff" stroke="#fff" stroke-width="0.6" stroke-linejoin="round"/><path d="M16.94,25.28 L22.61,25.70 L22.60,29.41 L18.52,31.15 Z" fill="#fff" stroke="#fff" stroke-width="0.6" stroke-linejoin="round"/>
<rect x="85" y="16" width="6" height="1.3" fill="#1d3f8f"/>
<path d="M84.8,19.2 L91.2,19.2 L88,23 Z" fill="#1d3f8f"/>
</svg>
</body></html>
